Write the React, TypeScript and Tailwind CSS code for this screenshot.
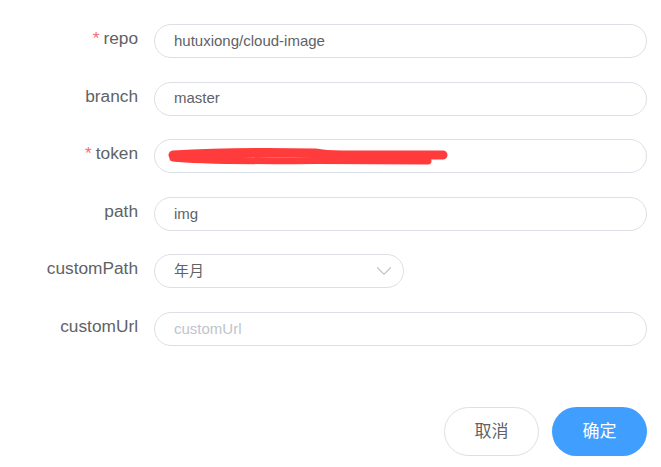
import { ChevronDown } from "lucide-react";

const font = { fontFamily: '"Liberation Sans", "Noto Sans CJK SC", sans-serif' };

type Field = {
  label: string;
  required?: boolean;
  value?: string;
  placeholder?: string;
  kind?: "input" | "select" | "secret";
};

const fields: Field[] = [
  { label: "repo", required: true, value: "hutuxiong/cloud-image" },
  { label: "branch", value: "master" },
  { label: "token", required: true, kind: "secret" },
  { label: "path", value: "img" },
  { label: "customPath", value: "年月", kind: "select" },
  { label: "customUrl", placeholder: "customUrl" },
];

// token is blanked out in the screenshot with a red marker
const Scribble = () => (
  <svg width="290" height="24" viewBox="0 0 290 24" className="absolute left-[12px] top-[6px]">
    <path
      d="M6 9 C40 7 100 6 148 7 C158 9 165 9 175 9 L276 9"
      stroke="#ff3b3b"
      strokeWidth="9"
      strokeLinecap="round"
      fill="none"
    />
    <path
      d="M6 12 C30 15 80 15 150 14.5 L261 15"
      stroke="#ff3b3b"
      strokeWidth="7"
      strokeLinecap="round"
      fill="none"
    />
  </svg>
);

const App = () => {
  return (
    <div className="w-[661px] h-[467px] bg-white" style={font}>
      <div className="flex flex-col pt-[24px] gap-[23.6px]">
        {fields.map((f) => (
          <div key={f.label} className="flex items-start">
            <label className="w-[139px] text-right text-[17.3px] leading-[28px] text-[#606266] pr-[1px]">
              {f.required && <span className="text-[#f56c6c] mr-[4px]">*</span>}
              {f.label}
            </label>
            {f.kind === "select" ? (
              <div className="ml-[15px] w-[250px] h-[34px] rounded-full border border-[#dcdfe6] flex items-center justify-between pl-[19px] pr-[6px] text-[15px] text-[#606266]">
                <span>{f.value}</span>
                <ChevronDown className="w-[26px] h-[26px] text-[#c0c4cc]" strokeWidth={1} />
              </div>
            ) : (
              <div className="relative ml-[15px] w-[493px] h-[34px] rounded-full border border-[#dcdfe6] flex items-center pl-[19px] text-[15px]">
                {f.kind === "secret" ? (
                  <Scribble />
                ) : f.value ? (
                  <span className="text-[#606266]">{f.value}</span>
                ) : (
                  <span className="text-[#c0c4cc]">{f.placeholder}</span>
                )}
              </div>
            )}
          </div>
        ))}
      </div>
      <div className="flex justify-end gap-[13px] pr-[14px] mt-[61px]">
        <button className="w-[95px] h-[49px] rounded-full border border-[#dcdfe6] bg-white text-[17px] text-[#606266]">
          取消
        </button>
        <button className="w-[95px] h-[49px] rounded-full bg-[#409eff] text-[17px] text-white">
          确定
        </button>
      </div>
    </div>
  );
};

export default App;
